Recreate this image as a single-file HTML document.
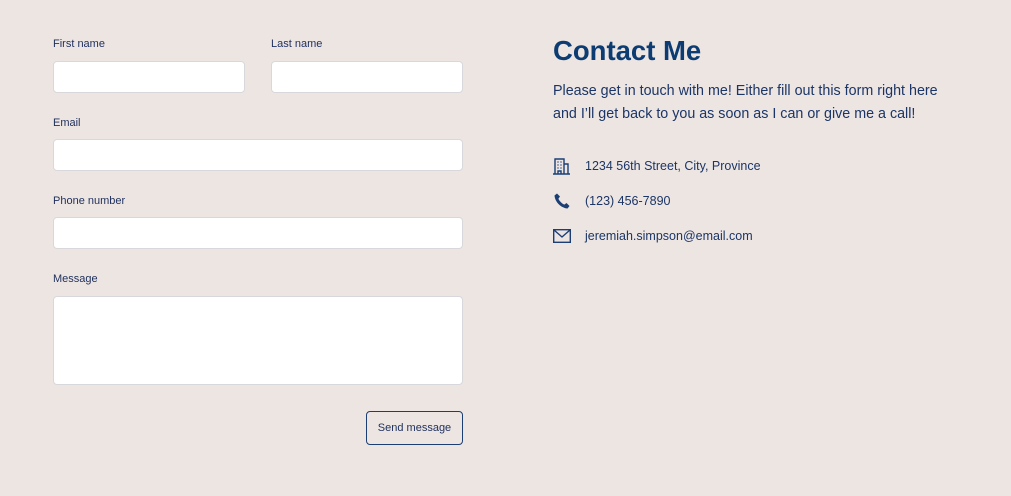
<!DOCTYPE html>
<html><head><style>
body{margin:0;width:1011px;height:496px;background:#ede5e2;font-family:"Liberation Sans",sans-serif;color:#1b3566;position:relative;overflow:hidden}
.l{position:absolute;font-size:11px;color:#1e2f5c}
.i{position:absolute;background:#fff;border:1px solid #d8d8dc;border-radius:4px;box-sizing:border-box}
.t{position:absolute;font-size:12.5px;left:585px;color:#1b3566}
svg{position:absolute}
</style></head><body>
<div class="l" style="left:53px;top:38px">First name</div>
<div class="l" style="left:271px;top:38px">Last name</div>
<div class="i" style="left:53px;top:61px;width:192px;height:32px"></div>
<div class="i" style="left:271px;top:61px;width:192px;height:32px"></div>
<div class="l" style="left:53px;top:117px">Email</div>
<div class="i" style="left:53px;top:139px;width:410px;height:32px"></div>
<div class="l" style="left:53px;top:195px">Phone number</div>
<div class="i" style="left:53px;top:217px;width:410px;height:32px"></div>
<div class="l" style="left:53px;top:273px">Message</div>
<div class="i" style="left:53px;top:296px;width:410px;height:89px"></div>
<div style="position:absolute;left:366px;top:411px;width:97px;height:34px;box-sizing:border-box;border:1px solid #1b3f75;border-radius:4px;font-size:11px;line-height:33px;text-align:center;color:#1e2f5c">Send message</div>
<div style="position:absolute;left:553px;top:35px;font-size:27.5px;font-weight:bold;color:#0d3c73">Contact Me</div>
<div style="position:absolute;left:553px;top:80px;width:400px;font-size:14.3px;line-height:23px;color:#1b3566">Please get in touch with me! Either fill out this form right here and I’ll get back to you as soon as I can or give me a call!</div>
<svg style="left:553px;top:158px" width="17" height="17" viewBox="0 0 17 17" fill="none" stroke="#1b3f75" stroke-width="1.4"><path d="M2 16V1h9v15M11 6h4v10M0 16h17"/><path d="M4.5 4h1M7.5 4h1M4.5 7h1M7.5 7h1M4.5 10h1M7.5 10h1M5 16v-3h3v3"/></svg>
<div class="t" style="top:159px">1234 56th Street, City, Province</div>
<svg style="left:554px;top:193px" width="16" height="16" viewBox="0 0 16 16"><path fill="#1b3f75" d="M3 0.5l3 3-1.6 2.2c1 2.2 3.5 4.8 5.9 5.9L12.5 10l3 3-2 2.5C7 15 1 9 0.5 2.5z"/></svg>
<div class="t" style="top:194px">(123) 456-7890</div>
<svg style="left:553px;top:229px" width="18" height="14" viewBox="0 0 18 14" fill="none" stroke="#1b3f75" stroke-width="1.4"><rect x="0.7" y="0.7" width="16.6" height="12.6"/><path d="M1 1l8 7 8-7"/></svg>
<div class="t" style="top:229px">jeremiah.simpson@email.com</div>
</body></html>
